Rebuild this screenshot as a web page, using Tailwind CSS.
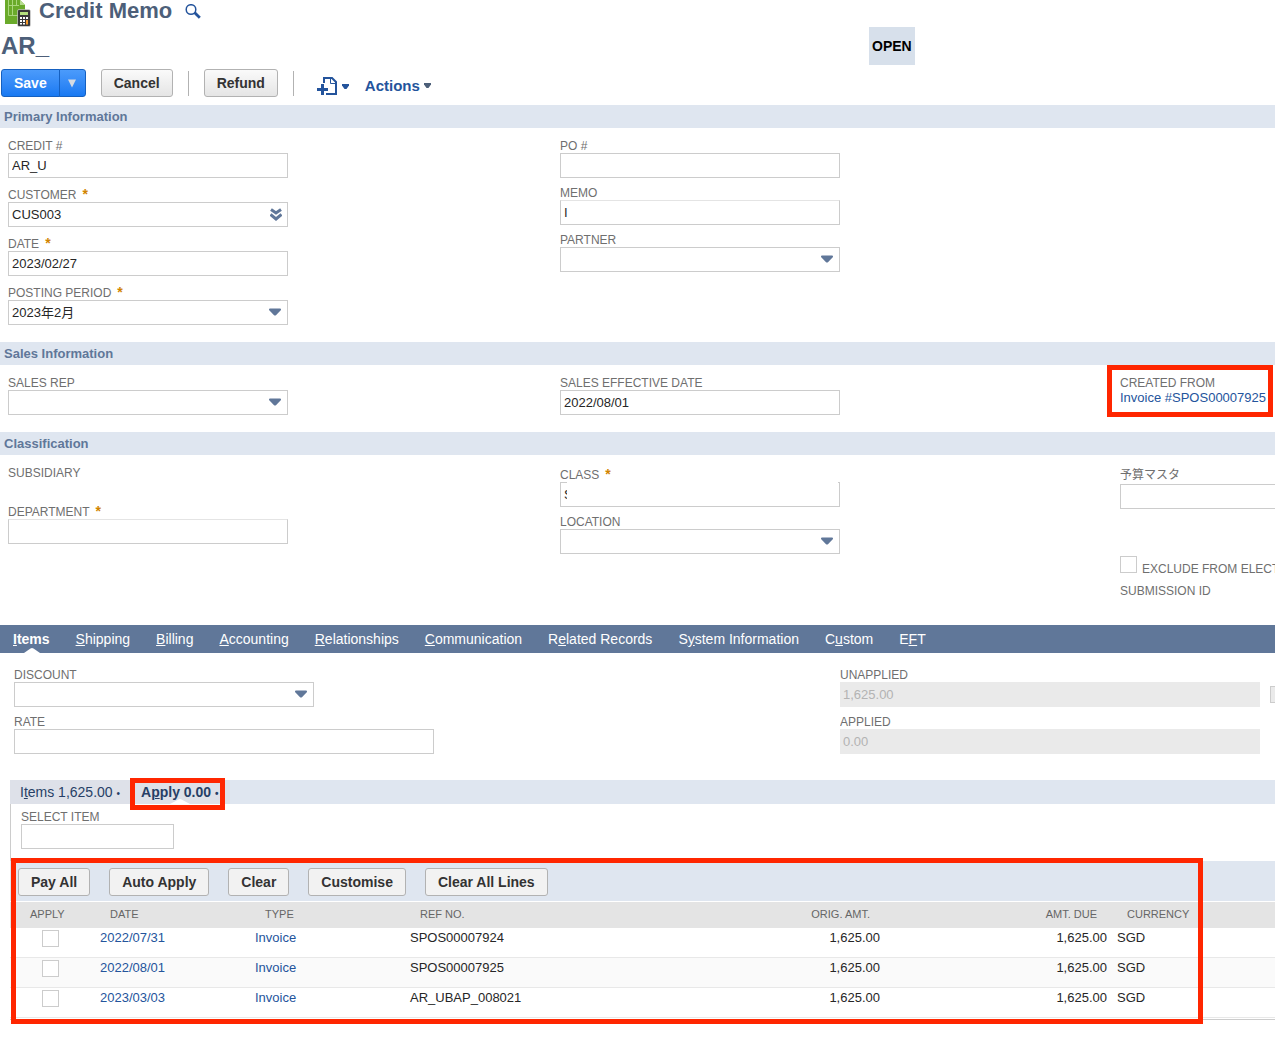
<!DOCTYPE html>
<html lang="en">
<head>
  <meta charset="UTF-8" />
  <meta name="viewport" content="width=device-width,initial-scale=1" />
  <title>Credit Memo</title>
  <script src="https://cdn.jsdelivr.net/npm/@tailwindcss/browser@4"></script>
</head>

<body class="pb-6 bg-white text-[13px] leading-[15px] text-[#262626] font-['Liberation_Sans','Noto_Sans_CJK_JP',sans-serif] overflow-x-hidden">

<!-- shared icons -->
<svg class="hidden">
  <symbol id="caret" viewBox="0 0 12 8"><path d="M1 0.500h10q1 0 1 1v.6L7.200 7q-1.200 1-2.400 0L0 2.100v-.6q0-1 1-1z" fill="#607799"/></symbol>
  <symbol id="chevrons" viewBox="0 0 12 13"><path d="M1 1.500L6 5l5-3.500M.5 6.500L6 11l5.500-4.500" fill="none" stroke="#607799" stroke-width="3"/></symbol>
</svg>

<!-- ========= HEADER ========= -->
<header>
  <div class="flex h-[27px] pl-[5px]">
    <svg class="w-[26px] h-[27px] shrink-0" viewBox="0 0 26 27">
      <path d="M0 0h15l5 5v19H0z" fill="#6aaa2a"/>
      <path d="M15 0v5h5z" fill="#b5dc8d"/>
      <path d="M3.500 0v15.500H13M7.500 0v15.500M3.500 5.500H14M11.500 0v5.500" fill="none" stroke="#a9d67c"/>
      <rect x="12.500" y="9.500" width="13" height="17" rx="1.500" fill="#3a3a3a" stroke="#fff" stroke-width=".5"/>
      <rect x="15" y="12" width="8" height="3" fill="#b5e07e"/>
      <path d="M15 17h2v2h-2zM18 17h2v2h-2zM21 17h2v2h-2zM15 20h2v2h-2zM18 20h2v2h-2zM15 23h2v1.500h-2zM18 23h2v1.500h-2z" fill="#fff"/>
      <path d="M21 20h2v4.500h-2z" fill="#f79a2b"/>
    </svg>
    <h1 class="ml-2 text-[22px] leading-[22px] font-bold text-[#4d5f79]">Credit Memo</h1>
    <a href="#" aria-label="Search" class="ml-[13px]">
      <svg class="mt-1 w-4 h-[15px]" viewBox="0 0 16 15" fill="none" stroke="#24549c">
        <circle cx="6" cy="5.500" r="4.800" stroke-width="1.500"/>
        <path d="M9.500 8.500l5.300 5.300" stroke-width="2.800"/>
      </svg>
    </a>
  </div>

  <div class="grid grid-cols-[869fr_406fr] h-[38px]">
    <div class="self-center pl-px text-2xl leading-6 font-bold text-[#4d5f79]">AR_</div>
    <div class="justify-self-start flex items-center px-[3px] bg-[#d7e0eb] text-sm font-bold text-black">OPEN</div>
  </div>

  <div class="flex items-center mt-1 mb-2 pl-px h-7 text-sm font-bold">
    <div class="flex h-7 text-white">
      <button class="px-3 rounded-l-[3px] border border-[#1560c0] bg-linear-to-b from-[#4b9bfb] to-[#1879f2]">Save</button>
      <button aria-label="Save options" class="w-[27px] -ml-px flex items-center justify-center rounded-r-[3px] border border-[#1560c0] bg-linear-to-b from-[#4b9bfb] to-[#1879f2]">
        <svg class="w-[10px] h-[9px]" viewBox="0 0 10 9"><path d="M1 .5h8L5 8.500z" fill="#d6dbe2"/></svg>
      </button>
    </div>
    <button class="ml-[15px] h-7 px-3 rounded-[3px] border border-[#b2b2b2] bg-linear-to-b from-[#fafafa] to-[#e5e5e5] text-[#333]">Cancel</button>
    <span class="ml-[15px] w-px h-[25px] bg-[#b2b2b2]"></span>
    <button class="ml-[15px] h-7 px-3 rounded-[3px] border border-[#b2b2b2] bg-linear-to-b from-[#fafafa] to-[#e5e5e5] text-[#333]">Refund</button>
    <span class="ml-[15px] w-px h-[25px] bg-[#b2b2b2]"></span>
    <button aria-label="Create new" class="ml-[23px] mt-[6px] flex items-center gap-[5px]">
      <svg class="w-5 h-[18px]" viewBox="0 0 20 18" fill="none" stroke="#24549c">
        <path d="M7 6V1h8l4 4v12H9" stroke-width="2"/>
        <path d="M13.500 1.500v5H19" stroke-width="1"/>
        <path d="M0 12.500h11M5.500 7v11" stroke-width="3"/>
      </svg>
      <svg class="w-[7px] h-[5px]" viewBox="0 0 7 5"><path d="M0 0h7v1.500L4.500 5h-2L0 1.500z" fill="#24549c"/></svg>
    </button>
    <button class="ml-4 mt-[6px] flex items-center gap-1 text-[15px] text-[#24549c]">Actions
      <svg class="w-[7px] h-[5px]" viewBox="0 0 7 5"><path d="M0 0h7v1.500L4.500 5h-2L0 1.500z" fill="#4d5f79"/></svg>
    </button>
  </div>
</header>

<main>
<!-- ========= PRIMARY INFORMATION ========= -->
<section>
  <h2 class="h-[23px] pl-1 leading-[23px] font-bold text-[#607799] bg-[#dfe6f0]">Primary Information</h2>
  <div class="grid grid-cols-[552fr_560fr_155fr] pl-2 pt-[10px] pb-[17px]">
    <div class="flex flex-col gap-[7px]">
      <div>
        <label for="credit" class="block pt-[2px] text-xs leading-[13px] text-[#6f6f6f]">CREDIT #</label>
        <input id="credit" value="AR_U" class="block w-[280px] h-[25px] px-[3px] border border-[#ccc]">
      </div>
      <div>
        <label for="customer" class="flex pt-1 text-xs leading-[13px] text-[#6f6f6f]">CUSTOMER <span class="ml-[6px] -mt-px text-sm leading-[13px] font-bold text-[#d18400]">*</span></label>
        <div class="relative w-[280px]">
          <input id="customer" value="CUS003" class="block w-full h-[25px] px-[3px] border border-[#ccc]">
          <svg class="absolute right-[6px] top-[6px] w-3 h-[13px]"><use href="#chevrons"/></svg>
        </div>
      </div>
      <div>
        <label for="date" class="flex pt-1 text-xs leading-[13px] text-[#6f6f6f]">DATE <span class="ml-[6px] -mt-px text-sm leading-[13px] font-bold text-[#d18400]">*</span></label>
        <input id="date" value="2023/02/27" class="block w-[280px] h-[25px] px-[3px] border border-[#ccc]">
      </div>
      <div>
        <label for="period" class="flex pt-1 text-xs leading-[13px] text-[#6f6f6f]">POSTING PERIOD <span class="ml-[6px] -mt-px text-sm leading-[13px] font-bold text-[#d18400]">*</span></label>
        <div class="relative w-[280px]">
          <select id="period" class="block appearance-none w-full h-[25px] px-[3px] border border-[#ccc]"><option>2023年2月</option></select>
          <svg class="absolute right-[7px] top-[8px] w-3 h-2 pointer-events-none"><use href="#caret"/></svg>
        </div>
      </div>
    </div>
    <div class="flex flex-col gap-[7px]">
      <div>
        <label for="po" class="block pt-[2px] text-xs leading-[13px] text-[#6f6f6f]">PO #</label>
        <input id="po" class="block w-[280px] h-[25px] px-[3px] border border-[#ccc]">
      </div>
      <div>
        <label for="memo" class="block pt-[2px] text-xs leading-[13px] text-[#6f6f6f]">MEMO</label>
        <input id="memo" value="I" class="block w-[280px] h-[25px] px-[3px] border border-[#ccc] border-t-[#e4e4e4]">
      </div>
      <div>
        <label for="partner" class="block pt-[2px] text-xs leading-[13px] text-[#6f6f6f]">PARTNER</label>
        <div class="relative w-[280px]">
          <select id="partner" class="block appearance-none w-full h-[25px] px-[3px] border border-[#ccc]"><option></option></select>
          <svg class="absolute right-[7px] top-[8px] w-3 h-2 pointer-events-none"><use href="#caret"/></svg>
        </div>
      </div>
    </div>
  </div>
</section>

<!-- ========= SALES INFORMATION ========= -->
<section>
  <h2 class="h-[23px] pl-1 leading-[23px] font-bold text-[#607799] bg-[#dfe6f0]">Sales Information</h2>
  <div class="grid grid-cols-[552fr_560fr_155fr] pl-2 pt-[10px] pb-[17px]">
    <div>
      <label for="rep" class="block pt-[2px] text-xs leading-[13px] text-[#6f6f6f]">SALES REP</label>
      <div class="relative w-[280px]">
        <select id="rep" class="block appearance-none w-full h-[25px] px-[3px] border border-[#ccc]"><option></option></select>
        <svg class="absolute right-[7px] top-[8px] w-3 h-2 pointer-events-none"><use href="#caret"/></svg>
      </div>
    </div>
    <div>
      <label for="effective" class="block pt-[2px] text-xs leading-[13px] text-[#6f6f6f]">SALES EFFECTIVE DATE</label>
      <input id="effective" value="2022/08/01" class="block w-[280px] h-[25px] px-[3px] border border-[#ccc]">
    </div>
    <div class="relative">
      <div class="pt-[2px] text-xs leading-[13px] text-[#6f6f6f]">CREATED FROM</div>
      <a href="#" class="block whitespace-nowrap text-[#24549c]">Invoice #SPOS00007925</a>
      <!-- highlight -->
      <span class="absolute -left-[13px] -top-[10px] right-[2px] h-[52px] border-[5px] border-[#ff2600] pointer-events-none"></span>
    </div>
  </div>
</section>

<!-- ========= CLASSIFICATION ========= -->
<section>
  <h2 class="h-[23px] pl-1 leading-[23px] font-bold text-[#607799] bg-[#dfe6f0]">Classification</h2>
  <div class="grid grid-cols-[552fr_560fr_155fr] pl-2 pt-[10px] pb-[27px]">
    <div class="flex flex-col gap-[7px]">
      <div class="h-[30px] pt-[2px] text-xs leading-[13px] text-[#6f6f6f]">SUBSIDIARY</div>
      <div>
        <label for="department" class="flex pt-1 text-xs leading-[13px] text-[#6f6f6f]">DEPARTMENT <span class="ml-[6px] -mt-px text-sm leading-[13px] font-bold text-[#d18400]">*</span></label>
        <input id="department" class="block w-[280px] h-[25px] px-[3px] border border-[#ccc] border-t-[#e4e4e4]">
      </div>
    </div>
    <div class="flex flex-col gap-[7px]">
      <div>
        <label for="class" class="flex pt-1 text-xs leading-[13px] text-[#6f6f6f]">CLASS <span class="ml-[6px] -mt-px text-sm leading-[13px] font-bold text-[#d18400]">*</span></label>
        <div class="relative w-[280px]">
          <input id="class" value="S" class="block w-full h-[25px] px-[3px] border border-[#ccc]">
          <span class="absolute left-[7px] right-[2px] top-0 h-5 bg-white"></span>
        </div>
      </div>
      <div>
        <label for="location" class="block pt-[2px] text-xs leading-[13px] text-[#6f6f6f]">LOCATION</label>
        <div class="relative w-[280px]">
          <select id="location" class="block appearance-none w-full h-[25px] px-[3px] border border-[#ccc]"><option></option></select>
          <svg class="absolute right-[7px] top-[8px] w-3 h-2 pointer-events-none"><use href="#caret"/></svg>
        </div>
      </div>
    </div>
    <div class="min-w-0 overflow-hidden text-xs">
      <label for="budget" class="block pt-[2px] leading-[17px] text-[#6f6f6f]">予算マスタ</label>
      <input id="budget" class="block w-[280px] h-[25px] px-[3px] border border-[#ccc]">
      <div class="flex gap-[5px] mt-[47px] whitespace-nowrap">
        <input id="exclude" type="checkbox" class="appearance-none shrink-0 w-[17px] h-[17px] border border-[#ccc]">
        <label for="exclude" class="pt-[7px] leading-[13px] text-[#6f6f6f]">EXCLUDE FROM ELECT</label>
      </div>
      <div class="mt-[7px] pt-[2px] leading-[13px] text-[#6f6f6f]">SUBMISSION ID</div>
    </div>
  </div>
</section>

<!-- ========= TABS ========= -->
<nav class="flex h-7 leading-7 text-sm whitespace-nowrap text-white bg-[#607799]">
  <a href="#" class="relative px-[13px] font-bold"><u>I</u>tems
    <svg class="absolute left-6 bottom-0 w-4 h-[5px]" viewBox="0 0 16 5"><path d="M0 5l6.500-4.500q1.500-1 3 0L16 5z" fill="#fff"/></svg>
  </a>
  <a href="#" class="px-[13px]"><u>S</u>hipping</a>
  <a href="#" class="px-[13px]"><u>B</u>illing</a>
  <a href="#" class="px-[13px]"><u>A</u>ccounting</a>
  <a href="#" class="px-[13px]"><u>R</u>elationships</a>
  <a href="#" class="px-[13px]"><u>C</u>ommunication</a>
  <a href="#" class="px-[13px]">R<u>e</u>lated Records</a>
  <a href="#" class="px-[13px]">S<u>y</u>stem Information</a>
  <a href="#" class="px-[13px]">C<u>u</u>stom</a>
  <a href="#" class="px-[13px]">E<u>F</u>T</a>
</nav>

<section class="grid grid-cols-[826fr_435fr] pl-[14px] pt-[14px] pb-[26px]">
  <div class="flex flex-col gap-[7px]">
    <div>
      <label for="discount" class="block pt-[2px] text-xs leading-[13px] text-[#6f6f6f]">DISCOUNT</label>
      <div class="relative w-[300px]">
        <select id="discount" class="block appearance-none w-full h-[25px] px-[3px] border border-[#ccc]"><option></option></select>
        <svg class="absolute right-[7px] top-[8px] w-3 h-2 pointer-events-none"><use href="#caret"/></svg>
      </div>
    </div>
    <div>
      <label for="rate" class="block pt-[2px] text-xs leading-[13px] text-[#6f6f6f]">RATE</label>
      <input id="rate" class="block w-[420px] h-[25px] px-[3px] border border-[#ccc]">
    </div>
  </div>
  <div class="flex flex-col gap-[7px] min-w-0 overflow-hidden">
    <div>
      <label for="unapplied" class="block pt-[2px] text-xs leading-[13px] text-[#6f6f6f]">UNAPPLIED</label>
      <div class="flex items-center gap-[10px]">
        <input id="unapplied" disabled value="1,625.00" class="shrink-0 w-[420px] h-[25px] px-[3px] bg-[#eaeaea] text-[#b3b3b3]">
        <input type="checkbox" disabled aria-label="Auto apply" class="appearance-none shrink-0 w-[17px] h-[17px] border border-[#ccc] bg-[#eaeaea]">
      </div>
    </div>
    <div>
      <label for="applied" class="block pt-[2px] text-xs leading-[13px] text-[#6f6f6f]">APPLIED</label>
      <input id="applied" disabled value="0.00" class="block w-[420px] h-[25px] px-[3px] bg-[#eaeaea] text-[#b3b3b3]">
    </div>
  </div>
</section>

<!-- ========= APPLY SUBLIST ========= -->
<section class="ml-[10px]">
  <nav class="flex h-6 leading-6 text-sm whitespace-nowrap text-[#273f66] bg-[#dfe6f0]">
    <a href="#" class="w-[120px] pl-[10px] bg-[#dee1e9]">I<u>t</u>ems 1,625.00 <span class="text-[10px]">•</span></a>
    <a href="#" class="relative w-[100px] pl-[11px] font-bold bg-[#dee1e9]">A<u>p</u>ply 0.00 <span class="text-[10px]">•</span>
      <svg class="absolute left-10 bottom-0 w-5 h-[5px]" viewBox="0 0 20 5"><path d="M0 5l8.500-4.500q1.500-1 3 0L20 5z" fill="#fff"/></svg>
      <!-- highlight -->
      <span class="absolute left-0 -top-[2px] w-[95px] h-8 border-[5px] border-[#ff2600] pointer-events-none"></span>
    </a>
  </nav>

  <div class="pl-[10px] pt-[5px] pb-3 border-l border-[#ccc]">
    <label for="item" class="block pt-[2px] text-xs leading-[13px] text-[#6f6f6f]">SELECT ITEM</label>
    <input id="item" class="block w-[153px] h-[25px] px-[3px] border border-[#ccc]">
  </div>

  <div class="relative">
    <div class="flex gap-[19px] px-2 pt-[7px] pb-[5px] text-sm font-bold text-[#333] bg-[#dfe6f0]">
      <button class="h-7 px-3 rounded-[3px] border border-[#b2b2b2] bg-[#f2f2f2]">Pay All</button>
      <button class="h-7 px-3 rounded-[3px] border border-[#b2b2b2] bg-[#f2f2f2]">Auto Apply</button>
      <button class="h-7 px-3 rounded-[3px] border border-[#b2b2b2] bg-[#f2f2f2]">Clear</button>
      <button class="h-7 px-3 rounded-[3px] border border-[#b2b2b2] bg-[#f2f2f2]">Customise</button>
      <button class="h-7 px-3 rounded-[3px] border border-[#b2b2b2] bg-[#f2f2f2]">Clear All Lines</button>
    </div>

    <table class="w-full mt-px table-fixed border-b border-[#ccc] border-separate border-spacing-0 pb-px">
      <colgroup>
        <col class="w-[85px]"><col class="w-[155px]"><col class="w-[155px]">
        <col class="w-[200px]"><col class="w-[280px]"><col class="w-[227px]"><col>
      </colgroup>
      <thead class="text-[11px] text-left text-[#666] bg-[#e4e4e4]">
        <tr class="h-[26px]">
          <th class="pl-5 pb-[2px] font-normal">APPLY</th>
          <th class="px-[15px] pb-[2px] font-normal">DATE</th>
          <th class="px-[15px] pb-[2px] font-normal">TYPE</th>
          <th class="px-[15px] pb-[2px] font-normal">REF NO.</th>
          <th class="px-[15px] pb-[2px] font-normal text-right">ORIG. AMT.</th>
          <th class="px-[15px] pb-[2px] font-normal text-right">AMT. DUE</th>
          <th class="px-[15px] pb-[2px] font-normal">CURRENCY</th>
        </tr>
      </thead>
      <tbody class="align-top">
        <tr class="h-[30px]">
          <td class="pl-8 pt-[2px] border-b border-[#e8e8e8]"><input type="checkbox" aria-label="Apply SPOS00007924" class="block appearance-none w-[17px] h-[17px] border border-[#ccc] bg-white"></td>
          <td class="px-[5px] pt-[2px] border-b border-[#e8e8e8]"><a href="#" class="text-[#24549c]">2022/07/31</a></td>
          <td class="px-[5px] pt-[2px] border-b border-[#e8e8e8]"><a href="#" class="text-[#24549c]">Invoice</a></td>
          <td class="px-[5px] pt-[2px] border-b border-[#e8e8e8]">SPOS00007924</td>
          <td class="px-[5px] pt-[2px] border-b border-[#e8e8e8] text-right">1,625.00</td>
          <td class="px-[5px] pt-[2px] border-b border-[#e8e8e8] text-right">1,625.00</td>
          <td class="px-[5px] pt-[2px] border-b border-[#e8e8e8]">SGD</td>
        </tr>
        <tr class="h-[30px] bg-[#fafafa]">
          <td class="pl-8 pt-[2px] border-b border-[#e8e8e8]"><input type="checkbox" aria-label="Apply SPOS00007925" class="block appearance-none w-[17px] h-[17px] border border-[#ccc] bg-white"></td>
          <td class="px-[5px] pt-[2px] border-b border-[#e8e8e8]"><a href="#" class="text-[#24549c]">2022/08/01</a></td>
          <td class="px-[5px] pt-[2px] border-b border-[#e8e8e8]"><a href="#" class="text-[#24549c]">Invoice</a></td>
          <td class="px-[5px] pt-[2px] border-b border-[#e8e8e8]">SPOS00007925</td>
          <td class="px-[5px] pt-[2px] border-b border-[#e8e8e8] text-right">1,625.00</td>
          <td class="px-[5px] pt-[2px] border-b border-[#e8e8e8] text-right">1,625.00</td>
          <td class="px-[5px] pt-[2px] border-b border-[#e8e8e8]">SGD</td>
        </tr>
        <tr class="h-[30px]">
          <td class="pl-8 pt-[2px] border-b border-[#e8e8e8]"><input type="checkbox" aria-label="Apply AR_UBAP_008021" class="block appearance-none w-[17px] h-[17px] border border-[#ccc] bg-white"></td>
          <td class="px-[5px] pt-[2px] border-b border-[#e8e8e8]"><a href="#" class="text-[#24549c]">2023/03/03</a></td>
          <td class="px-[5px] pt-[2px] border-b border-[#e8e8e8]"><a href="#" class="text-[#24549c]">Invoice</a></td>
          <td class="px-[5px] pt-[2px] border-b border-[#e8e8e8]">AR_UBAP_008021</td>
          <td class="px-[5px] pt-[2px] border-b border-[#e8e8e8] text-right">1,625.00</td>
          <td class="px-[5px] pt-[2px] border-b border-[#e8e8e8] text-right">1,625.00</td>
          <td class="px-[5px] pt-[2px] border-b border-[#e8e8e8]">SGD</td>
        </tr>
      </tbody>
    </table>
    <!-- highlight -->
    <span class="absolute left-px -top-[3px] right-[72px] -bottom-1 border-[5px] border-[#ff2600] pointer-events-none"></span>
  </div>
</section>
</main>
</body>
</html>
